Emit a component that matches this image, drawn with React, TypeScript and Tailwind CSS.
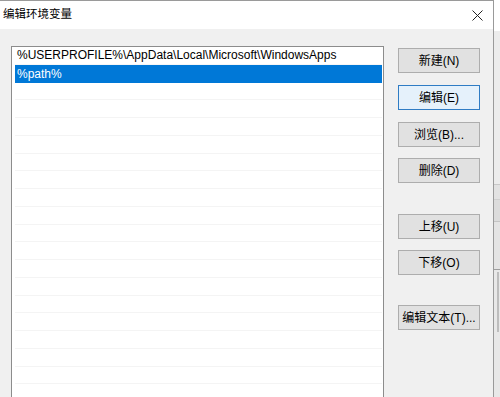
const font = { fontFamily: '"Liberation Sans", "Noto Sans CJK SC", sans-serif' };

const rows = ["%USERPROFILE%\\AppData\\Local\\Microsoft\\WindowsApps", "%path%"];

const Button = ({ label, focused }: { label: string; focused?: boolean }) => (
  <div
    className={
      "w-[82px] h-[25px] flex items-center justify-center text-[12px] text-black border " +
      (focused ? "bg-[#e5f1fb] border-[#2f7cc4]" : "bg-[#e1e1e1] border-[#adadad]")
    }
  >
    {label}
  </div>
);

export default function App() {
  const empty = Array.from({ length: 20 });
  return (
    <div className="w-[500px] h-[397px] overflow-hidden flex bg-[#f0f0f0]" style={font}>
      <div className="w-[494px] h-full flex flex-col border-t border-r border-[#9a9a9a]">
        {/* title bar */}
        <div className="h-[28px] bg-white flex items-center justify-between pl-[3px] pr-[10px] shrink-0">
          <span className="text-[11.5px] text-black">编辑环境变量</span>
          <svg width="11" height="11" viewBox="0 0 11 11" className="text-[#222]">
            <path d="M0.5 0.5L10.5 10.5M10.5 0.5L0.5 10.5" stroke="currentColor" strokeWidth="1" />
          </svg>
        </div>

        <div className="flex-1 flex pl-[11px] pt-[17px] gap-[14px]">
          {/* list box */}
          <div className="w-[373px] h-[420px] bg-white border border-[#8c8c8c] pl-[3px] pr-[1px] shrink-0">
            {rows.map((r, i) => (
              <div
                key={r}
                className={
                  "h-[17.75px] flex items-center pl-[2px] text-[12px] whitespace-nowrap " +
                  (i === 1 ? "bg-[#0078d7] text-white" : "text-black border-b border-[#f6f6f6]")
                }
              >
                {r}
              </div>
            ))}
            {empty.map((_, i) => (
              <div key={i} className="h-[17.75px] border-b border-[#f4f4f4]" />
            ))}
          </div>

          {/* buttons */}
          <div className="flex flex-col pt-[2px]">
            <Button label="新建(N)" />
            <div className="h-[12px]" />
            <Button label="编辑(E)" focused />
            <div className="h-[12px]" />
            <Button label="浏览(B)..." />
            <div className="h-[11px]" />
            <Button label="删除(D)" />
            <div className="h-[31px]" />
            <Button label="上移(U)" />
            <div className="h-[11px]" />
            <Button label="下移(O)" />
            <div className="h-[30px]" />
            <Button label="编辑文本(T)..." />
          </div>
        </div>
      </div>

      {/* background window strip */}
      <div className="flex-1 flex flex-col">
        <div className="h-[31px] bg-white" />
        <div className="h-[154px] bg-[#ececec] border-b border-[#c8c8c8]" />
        <div className="h-[15px] bg-[#e2e2e2] border-b border-[#cfcfcf]" />
        <div className="h-[22px] bg-[#dcdcdc] border-b border-[#c4c4c4]" />
        <div className="h-[48px] bg-[#e4e4e4] border-b border-[#9e9e9e]" />
        <div className="flex-1 bg-[#e8e8e8] flex">
          <div className="w-[3px]" />
          <div className="w-[2px] h-[60px] mt-[2px] bg-[#bdbdbd]" />
        </div>
      </div>
    </div>
  );
}
